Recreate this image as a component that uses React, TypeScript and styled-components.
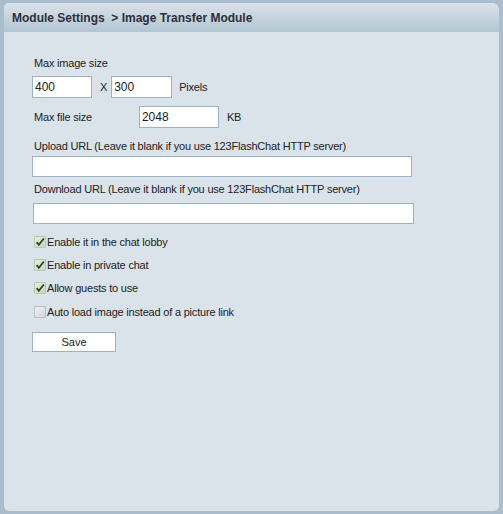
import styled, { createGlobalStyle } from "styled-components";

const Global = createGlobalStyle`
  html, body {
    margin: 0;
    padding: 0;
    background: #a9bdcd;
  }
  body {
    font-family: "Liberation Sans", Arial, sans-serif;
    font-size: 11px;
    letter-spacing: -0.2px;
    color: #222;
  }
`;

const Panel = styled.div`
  margin: 3px 4px 0 4px;
  height: 508px;
  background: #dae2ea;
  border-radius: 5px 7px 5px 5px;
  overflow: hidden;
  box-sizing: border-box;
  display: flex;
  flex-direction: column;
`;

const Header = styled.div`
  height: 29px;
  background: linear-gradient(#dae2ea, #b3c5d3);
  display: flex;
  align-items: center;
  padding-left: 8px;
  font-weight: bold;
  font-size: 12px;
  letter-spacing: 0;
  color: #2c3038;
  white-space: pre;
`;

const Body = styled.div`
  padding: 24px 0 0 28px;
  display: flex;
  flex-direction: column;
`;

const Label = styled.div<{ $top?: number }>`
  margin: ${(p) => p.$top ?? 0}px 0 0 2px;
  line-height: 14px;
  height: 14px;
`;

const Row = styled.div<{ $top?: number }>`
  display: flex;
  align-items: center;
  margin-top: ${(p) => p.$top ?? 0}px;
`;

const Field = styled.input<{ $w: number; $h?: number; $x?: number }>`
  width: ${(p) => p.$w}px;
  height: ${(p) => p.$h ?? 22}px;
  margin-left: ${(p) => p.$x ?? 0}px;
  box-sizing: border-box;
  border: 1px solid #9cb2c6;
  background: #fff;
  padding: 0 2px;
  font-family: "Liberation Sans", Arial, sans-serif;
  font-size: 12px;
  color: #222;
  outline: none;
`;

const Unit = styled.span<{ $x: number }>`
  margin-left: ${(p) => p.$x}px;
`;

const Check = styled.label<{ $top: number }>`
  display: flex;
  align-items: center;
  margin: ${(p) => p.$top}px 0 0 2px;
  height: 14px;
`;

const Box = styled.span<{ $on: boolean }>`
  width: 12px;
  height: 12px;
  box-sizing: border-box;
  border: 1px solid ${(p) => (p.$on ? "#b6c8b0" : "#b8bec4")};
  background: ${(p) =>
    p.$on
      ? "linear-gradient(135deg, #e4eee0, #c6d8c0)"
      : "linear-gradient(135deg, #f2f2f2, #d4d6d8)"};
  border-radius: 1px;
  display: flex;
  align-items: center;
  justify-content: center;
  margin-right: 1px;
  overflow: visible;
`;

const SaveButton = styled.button`
  margin: 13px 0 0 0;
  width: 84px;
  height: 20px;
  background: #fff;
  border: 1px solid #9cb2c6;
  font-family: "Liberation Sans", Arial, sans-serif;
  font-size: 11px;
  color: #222;
  padding: 0;
`;

function Tick() {
  return (
    <svg width="12" height="12" viewBox="0 0 12 12" style={{ marginTop: -1 }}>
      <path
        d="M2 6.2 L4.6 9.4 L10.6 1.8"
        fill="none"
        stroke="#264a20"
        strokeWidth="2.2"
        strokeLinejoin="miter"
      />
    </svg>
  );
}

const checks = [
  { text: "Enable it in the chat lobby", on: true, top: 11 },
  { text: "Enable in private chat", on: true, top: 9 },
  { text: "Allow guests to use", on: true, top: 9 },
  { text: "Auto load image instead of a picture link", on: false, top: 10 },
];

export default function App() {
  return (
    <>
      <Global />
      <Panel>
        <Header>{"Module Settings  > Image Transfer Module"}</Header>
        <Body>
          <Label>Max image size</Label>
          <Row $top={6}>
            <Field $w={60} defaultValue="400" />
            <Unit $x={8}>X</Unit>
            <Field $w={61} $x={4} defaultValue="300" />
            <Unit $x={7}>Pixels</Unit>
          </Row>
          <Row $top={8}>
            <Label>Max file size</Label>
            <Field $w={80} $x={47} defaultValue="2048" />
            <Unit $x={8}>KB</Unit>
          </Row>
          <Label $top={11}>
            Upload URL (Leave it blank if you use 123FlashChat HTTP server)
          </Label>
          <Row $top={3}>
            <Field $w={380} $h={21} />
          </Row>
          <Label $top={5}>
            Download URL (Leave it blank if you use 123FlashChat HTTP server)
          </Label>
          <Row $top={7}>
            <Field $w={381} $h={21} $x={1} />
          </Row>
          {checks.map((c) => (
            <Check key={c.text} $top={c.top}>
              <Box $on={c.on}>{c.on && <Tick />}</Box>
              {c.text}
            </Check>
          ))}
          <div>
            <SaveButton>Save</SaveButton>
          </div>
        </Body>
      </Panel>
    </>
  );
}
